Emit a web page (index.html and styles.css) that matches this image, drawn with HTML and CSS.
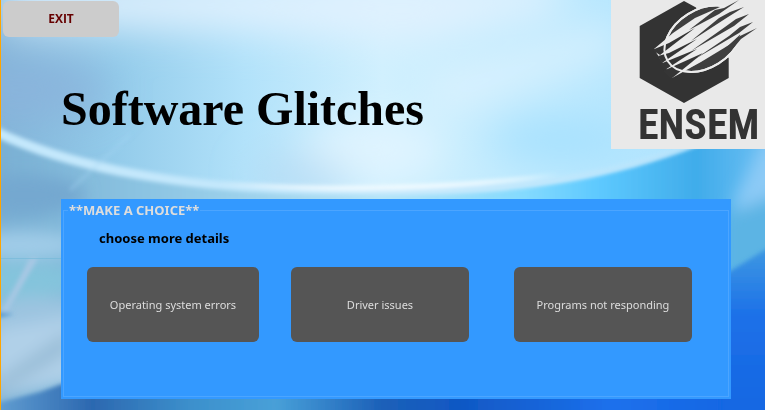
FILE: index.html
```html
<!DOCTYPE html>
<html lang="en">
<head>
<meta charset="utf-8">
<title>Software Glitches</title>
<meta name="viewport" content="width=device-width, initial-scale=1">
<link rel="stylesheet" href="styles.css">
</head>
<body>
<svg class="backdrop" viewBox="0 0 765 410" preserveAspectRatio="none" aria-hidden="true">
  <defs>
    <linearGradient id="sky" x1="0" y1="0" x2="1" y2="0">
      <stop offset="0" stop-color="#82b4d8"/><stop offset=".15" stop-color="#93cbea"/>
      <stop offset=".32" stop-color="#b2e2fa"/><stop offset=".5" stop-color="#d0f0fe"/>
      <stop offset=".7" stop-color="#bfeafe"/><stop offset="1" stop-color="#a8e0fe"/>
    </linearGradient>
    <linearGradient id="lower" x1="0" y1="0" x2="1" y2="0">
      <stop offset="0" stop-color="#78aed2"/><stop offset=".2" stop-color="#8cc4e2"/>
      <stop offset=".5" stop-color="#b4e4f8"/><stop offset=".68" stop-color="#84dafe"/>
      <stop offset=".78" stop-color="#5cc8fe"/><stop offset=".9" stop-color="#40acea"/><stop offset="1" stop-color="#70c0f4"/>
    </linearGradient>
    <linearGradient id="deep" x1="0" y1="0" x2="0" y2="1">
      <stop offset="0" stop-color="#48a4e0"/><stop offset=".4" stop-color="#1c70e8"/><stop offset="1" stop-color="#1464e0"/>
    </linearGradient>
    <linearGradient id="floor" gradientUnits="userSpaceOnUse" x1="0" y1="0" x2="765" y2="0">
      <stop offset="0" stop-color="#609cd0"/><stop offset=".12" stop-color="#2c68b0"/>
      <stop offset=".25" stop-color="#3c90cc"/><stop offset=".36" stop-color="#48a0d8"/>
      <stop offset=".5" stop-color="#1c60b8"/><stop offset=".6" stop-color="#1058c4"/><stop offset=".8" stop-color="#1c70ec"/><stop offset="1" stop-color="#1464e0"/>
    </linearGradient>
    <filter id="b2" x="-20%" y="-20%" width="140%" height="140%"><feGaussianBlur stdDeviation="2"/></filter>
    <filter id="b8" x="-50%" y="-50%" width="200%" height="200%"><feGaussianBlur stdDeviation="8"/></filter>
    <filter id="b20" x="-50%" y="-50%" width="200%" height="200%"><feGaussianBlur stdDeviation="20"/></filter>
  </defs>
  <rect width="765" height="410" fill="url(#sky)"/>
  <g filter="url(#b20)">
    <path d="M0-20H560V10L420 40 230 30 0 25Z" fill="#e0f1fe"/>
    <ellipse cx="20" cy="90" rx="90" ry="26" fill="#8ab4dc"/>
    <path d="M420 85L620 25V50L440 110Z" fill="#e0f3ff"/>
    <ellipse cx="375" cy="150" rx="70" ry="32" fill="#e0f4ff"/>
    <ellipse cx="300" cy="176" rx="50" ry="14" fill="#b4d8f2"/>
    <ellipse cx="560" cy="140" rx="70" ry="20" fill="#a4e0fe"/>
  </g>
  <path d="M-10 132C100 180 240 191 390 192S640 175 775 114V450H-10Z" fill="url(#lower)" filter="url(#b2)"/>
  <g filter="url(#b8)">
    <path d="M760 150L790 110V250L735 275V200Z" fill="#8ccaf6"/>
    <path d="M725 215L790 190V260L725 290Z" fill="#5cb4e4"/>
    <ellipse cx="25" cy="195" rx="60" ry="20" fill="#74a8d0"/>
    <ellipse cx="20" cy="245" rx="60" ry="14" fill="#a0cce8"/>
    <ellipse cx="20" cy="280" rx="60" ry="18" fill="#84c4dc"/>
    <ellipse cx="40" cy="315" rx="60" ry="18" fill="#9cc4e0"/>
    <path d="M-10 330L80 315V380L-10 400Z" fill="#b0d0e8"/>
    <path d="M-10 385L70 330V350L-10 400Z" fill="#98bcd6"/>
  </g>
  <g filter="url(#b2)">
    <path d="M-5 126C100 176 240 188 390 188S640 172 765 114C640 178 540 194 390 195S100 186-5 137Z" fill="#c4e8fc"/>
    <path d="M220 183Q390 192 560 174 400 202 220 183Z" fill="#f2fbff"/>
    <path d="M0 315L30 258 38 258 8 310Z" fill="#a8c8e4"/>
    <path d="M-4 312L14 314-4 318Z" fill="#4c94cc"/>
    <path d="M70 190L130 135" stroke="#a8d8f4" stroke-width="3" opacity=".4"/>
  </g>
  <path d="M0 258.500H61" stroke="#70b8d8" opacity=".55"/>
  <path d="M690 296L800 228V450H690Z" fill="url(#deep)" filter="url(#b2)"/>
  <g filter="url(#b2)"><path d="M-10 405L40 392 62 384H720V440H-10Z" fill="url(#floor)"/></g>
</svg>
<main class="page">
  <header class="top">
    <div class="lead">
      <button class="exit" type="button">EXIT</button>
      <h1 class="title">Software Glitches</h1>
    </div>
    <svg class="logo" viewBox="0 0 154 149" role="img" aria-label="ENSEM">
      <rect width="154" height="149" fill="#e9e9e9"/>
      <path d="M73 1L85 7.500 100 40 117.700 58V78L73 103 28.700 78V26Z" fill="#333"/>
      <ellipse cx="92.300" cy="38.700" rx="42" ry="29" transform="rotate(-32 92.300 38.700)" fill="#3f3f3f" stroke="#ececec" stroke-width="2"/>
      <path d="M43 49L62 33 84 18 109 7 127 4 133 14 134 30 118 45 90 62 61 78Z" fill="#ececec"/>
      <g fill="#353535">
        <path d="M41 50L49 55 84 28 58 43Z"/>
        <path d="M47 56L51 63 86 39 58 53Z"/>
        <path d="M49 64L54 70 86 49Z"/>
        <path d="M52 71L60 79 92 53Z"/>
      </g>
      <ellipse cx="92.300" cy="38.700" rx="42" ry="29" transform="rotate(-32 92.300 38.700)" fill="none" stroke="#ececec" stroke-width="2"/>
      <g fill="#3f3f3f">
        <path d="M128 0L108 14 78 30 104 10 113 8Z"/>
        <path d="M133 7L117 17 80 41 108 18 119 12Z"/>
        <path d="M138 14L123 26 80 51 114 27 125 19Z"/>
        <path d="M142 22L128 33 84 59 118 36 129 27Z"/>
        <path d="M146 28L130 39 120 51 108 60 92 66 80 68 108 53 129 36Z"/>
      </g>
      <text class="logo-text" x="27" y="139">ENSEM</text>
    </svg>
  </header>
  <section class="panel">
    <fieldset class="choices">
      <legend class="legend">**MAKE A CHOICE**</legend>
      <p class="hint">choose more details</p>
      <div class="options">
        <button class="option" type="button">Operating system errors</button>
        <button class="option" type="button">Driver issues</button>
        <button class="option" type="button">Programs not responding</button>
      </div>
    </fieldset>
  </section>
</main>
</body>
</html>
```
FILE: styles.css
```css
* { box-sizing: border-box; }
html, body { margin: 0; }
body {
  font-family: "Noto Sans", "Open Sans", sans-serif;
  font-size: 12px;
  line-height: 16px;
}
.backdrop {
  position: fixed;
  inset: 0;
  z-index: -1;
  width: 100%;
  height: 100%;
}
.page {
  min-height: 100vh;
  border-left: 1px solid #ffa500;
}
.top {
  display: flex;
  justify-content: space-between;
  align-items: flex-start;
}
.lead { padding: 1px 0 0 2px; }
.exit {
  display: block;
  width: 116px;
  height: 36px;
  padding: 0;
  border: 0;
  border-radius: 6px;
  background: #ccc;
  color: #660000;
  font: bold 12px/16px "Open Sans", "Noto Sans", sans-serif;
}
.title {
  margin: 44px 0 0 58px;
  font: bold 48px/56px "Liberation Serif", serif;
  color: #000;
}
.logo {
  flex: none;
  width: 154px;
  height: 149px;
}
.logo-text {
  font: bold 42px "Roboto Condensed", "Open Sans Condensed", Roboto, sans-serif;
  fill: #333;
}
.panel {
  margin: 50px 34px 0 60px;
  padding: 2px;
  background: #3399ff;
}
.choices {
  min-width: 0;
  min-height: 196px;
  margin: 0;
  padding: 0 36px 0 23px;
  border: 1px solid #4ca5ff;
}
.legend {
  margin-left: -19px;
  padding: 0 1px;
  color: #ddd;
  font-size: 13px;
  font-weight: bold;
  line-height: 18px;
}
.hint {
  margin: 10px 0 20px 12px;
  color: #000;
  font-size: 13px;
  font-weight: bold;
  line-height: 18px;
}
.options {
  display: grid;
  grid-template-columns: 172fr 32fr 178fr 45fr 178fr;
}
.option {
  height: 75px;
  padding: 0 8px;
  border: 0;
  border-radius: 6px;
  background: #555;
  color: #ddd;
  font: 11px/16px "Noto Sans", "Open Sans", sans-serif;
}
.option:nth-child(2) { grid-column: 3; }
.option:nth-child(3) { grid-column: 5; }
```
